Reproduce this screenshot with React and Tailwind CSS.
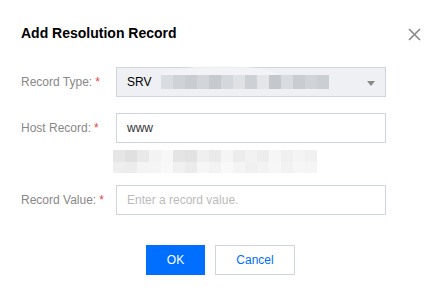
import React from "react";

const selBlocks = ["#d9dce1","#cfd2d7","#c9ccd1","#d2d5da","#c6c9ce","#d4d7dc","#dfe1e5","#cdd0d5","#e3e5e8","#c4c7cc","#d8dbe0","#c9ccd1","#d0d3d8","#cbced3"];
const hostTop = ["#e6e6e6","#e0e0e0","#e9e9e9","#f3f3f3","#f7f7f7","#e4e4e4","#e2e2e2","#efefef","#eaeaea","#f5f5f5","#ececec","#f2f2f2","#ededed","#f6f6f6","#f0f0f0","#f4f4f4","#f1f1f1"];
const hostBot = ["#eeeeee","#ececec","#f4f4f4","#f5f5f5","#f8f8f8","#f0f0f0","#ebebeb","#f6f6f6","#f3f3f3","#f9f9f9","#f4f4f4","#f0f0f0","#f3f3f3","#f7f7f7","#f2f2f2","#f6f6f6","#f5f5f5"];

function Label({ children }) {
  return (
    <div className="w-[95px] shrink-0 text-[12px] text-[#888888] leading-[30px]">
      {children}
      <span className="text-[#e54545] ml-[3px]">*</span>
    </div>
  );
}

export default function App() {
  return (
    <div className="w-[443px] h-[296px] bg-white px-[21px] flex flex-col" style={{ fontFamily: '"Liberation Sans", Arial, sans-serif' }}>
      <div className="flex items-center justify-between h-[16px] mt-[25px]">
        <div className="text-[14px] font-bold text-[#000000] leading-[16px]">Add Resolution Record</div>
        <svg width="13" height="13" viewBox="0 0 13 13" className="mr-[1px] mt-[2px]">
          <path d="M1 1 L12 12 M12 1 L1 12" stroke="#888888" strokeWidth="1.6" />
        </svg>
      </div>

      <div className="flex mt-[26px]">
        <Label>Record Type:</Label>
        <div className="relative w-[270px] h-[30px] border border-[#cfd5de] bg-[#eef0f3] flex items-center pl-[10px] text-[12px] text-[#000000]">
          <span>SRV</span>
          <div className="absolute left-[44px] top-[-2px] w-[120px] h-[22px] rounded-[50%] bg-[#f3f4f6] opacity-80"></div>
          <div className="absolute left-[44px] top-[7px] flex">
            {selBlocks.map((c, i) => (
              <div key={i} className="w-[12px] h-[14px]" style={{ background: c }}></div>
            ))}
          </div>
          <svg width="8" height="5" viewBox="0 0 8 5" className="absolute right-[10px] top-[13px]">
            <path d="M0 0 L8 0 L4 5 Z" fill="#888888" />
          </svg>
        </div>
      </div>

      <div className="flex mt-[16px]">
        <Label>Host Record:</Label>
        <div className="w-[270px] h-[30px] border border-[#cfd5de] bg-white flex items-center pl-[10px] text-[12px] text-[#333333]">
          www
        </div>
      </div>

      <div className="ml-[92px] mt-[7px] flex flex-col">
        <div className="flex">
          {hostTop.map((c, i) => (
            <div key={i} className="w-[12px] h-[12px]" style={{ background: c }}></div>
          ))}
        </div>
        <div className="flex">
          {hostBot.map((c, i) => (
            <div key={i} className="w-[12px] h-[11px]" style={{ background: c }}></div>
          ))}
        </div>
      </div>

      <div className="flex mt-[12px]">
        <Label>Record Value:</Label>
        <div className="w-[270px] h-[30px] border border-[#cfd5de] bg-white flex items-center pl-[10px] text-[12px] text-[#bbbbbb]">
          Enter a record value.
        </div>
      </div>

      <div className="flex justify-center gap-[10px] mt-[30px] pr-[2px]">
        <div className="w-[59px] h-[30px] bg-[#006eff] text-white text-[12px] flex items-center justify-center">OK</div>
        <div className="w-[80px] h-[30px] border border-[#cfd5de] text-[#006eff] text-[12px] flex items-center justify-center">Cancel</div>
      </div>
    </div>
  );
}
